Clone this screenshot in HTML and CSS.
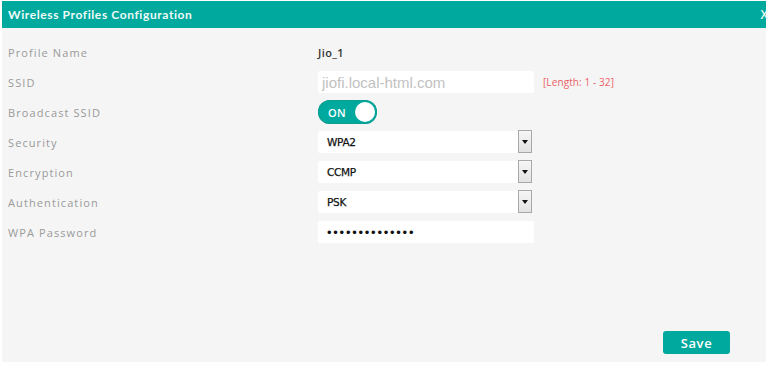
FILE: index.html
```html
<!DOCTYPE html>
<html>
<head>
<meta charset="utf-8">
<link rel="stylesheet" href="styles.css">
</head>
<body>
<div class="dialog">
  <div class="header">
    <span class="title">Wireless Profiles Configuration</span>
    <span class="close">X</span>
  </div>
  <div class="content">
    <div class="form">
      <div class="row">
        <div class="label">Profile Name</div>
        <div class="value"><span class="static">Jio_1</span></div>
      </div>
      <div class="row">
        <div class="label">SSID</div>
        <div class="value">
          <div class="input"><span class="placeholder">jiofi.local-html.com</span></div>
          <span class="hint">[Length: 1 - 32]</span>
        </div>
      </div>
      <div class="row">
        <div class="label">Broadcast SSID</div>
        <div class="value">
          <div class="toggle"><span class="toggle-text">ON</span><span class="knob"></span></div>
        </div>
      </div>
      <div class="row">
        <div class="label">Security</div>
        <div class="value">
          <div class="select"><span class="select-text">WPA2</span><span class="arrow"><span class="tri"></span></span></div>
        </div>
      </div>
      <div class="row">
        <div class="label">Encryption</div>
        <div class="value">
          <div class="select"><span class="select-text">CCMP</span><span class="arrow"><span class="tri"></span></span></div>
        </div>
      </div>
      <div class="row">
        <div class="label">Authentication</div>
        <div class="value">
          <div class="select"><span class="select-text">PSK</span><span class="arrow"><span class="tri"></span></span></div>
        </div>
      </div>
      <div class="row">
        <div class="label">WPA Password</div>
        <div class="value">
          <div class="input"><span class="dots">••••••••••••••</span></div>
        </div>
      </div>
    </div>
    <div class="footer">
      <button class="save">Save</button>
    </div>
  </div>
</div>
</body>
</html>
```
FILE: styles.css
```css
html, body {
  margin: 0;
  padding: 0;
  background: #ffffff;
}
body {
  font-family: "Open Sans", Lato, sans-serif;
}
.dialog {
  margin: 1px 2px 0 2px;
  width: 764px;
  height: 361px;
  display: flex;
  flex-direction: column;
  background: #f5f5f5;
}
.header {
  height: 27px;
  background: #00a99d;
  display: flex;
  align-items: center;
  justify-content: space-between;
  padding: 0 0 0 6px;
  color: #ffffff;
  flex-shrink: 0;
}
.title {
  font-family: Lato, sans-serif;
  font-size: 12px;
  font-weight: 700;
  letter-spacing: 0.6px;
  color: #eefaf8;
}
.close {
  font-size: 12px;
  font-weight: 600;
  color: #e6f7f5;
  margin-right: -2px;
}
.content {
  flex: 1;
  display: flex;
  flex-direction: column;
  padding-top: 9px;
}
.form {
  display: flex;
  flex-direction: column;
}
.row {
  height: 30px;
  display: flex;
  align-items: center;
}
.label {
  width: 310px;
  padding-left: 6px;
  box-sizing: border-box;
  font-size: 11px;
  letter-spacing: 1.1px;
  color: #9a9a9a;
}
.value {
  display: flex;
  align-items: center;
  padding-left: 6px;
}
.static {
  font-size: 11px;
  font-weight: 600;
  letter-spacing: 0.4px;
  color: #333333;
}
.input {
  width: 216px;
  height: 22px;
  background: #ffffff;
  border-radius: 2px;
  display: flex;
  align-items: center;
  padding-left: 4px;
  box-sizing: border-box;
}
.placeholder {
  font-family: "Liberation Sans", Arial, sans-serif;
  font-size: 15px;
  color: #c2c2c2;
}
.hint {
  margin-left: 9px;
  font-size: 10px;
  color: #ec5f67;
  letter-spacing: 0.1px;
}
.dots {
  font-family: "Liberation Sans", Arial, sans-serif;
  font-size: 13px;
  letter-spacing: 1.75px;
  color: #111111;
  padding-left: 5px;
}
.toggle {
  width: 59px;
  height: 24px;
  border-radius: 12px;
  background: #00a99d;
  box-sizing: border-box;
  display: flex;
  align-items: center;
  justify-content: space-between;
  padding: 0 2px 0 10px;
  box-shadow: inset 0 0 0 1px #0f9c91;
}
.toggle-text {
  font-size: 11px;
  font-weight: 600;
  color: #ffffff;
  letter-spacing: 0.3px;
}
.knob {
  width: 20px;
  height: 20px;
  border-radius: 50%;
  background: #ffffff;
}
.select {
  width: 214px;
  height: 22px;
  display: flex;
  align-items: stretch;
}
.select-text {
  flex: 1;
  background: #ffffff;
  border-radius: 2px 0 0 2px;
  display: flex;
  align-items: center;
  padding-left: 9px;
  font-family: "DejaVu Sans", Verdana, sans-serif;
  font-size: 10.5px;
  font-weight: 400;
  color: #111111;
  letter-spacing: -0.3px;
  -webkit-text-stroke: 0.25px #111111;
}
.arrow {
  width: 14px;
  box-sizing: border-box;
  border: 1px solid #a8a8a8;
  background: linear-gradient(#f6f6f6, #e2e2e2);
  display: flex;
  align-items: center;
  justify-content: center;
  margin-top: -1px;
}
.tri {
  width: 0;
  height: 0;
  border-left: 3px solid transparent;
  border-right: 3px solid transparent;
  border-top: 4px solid #111111;
}
.footer {
  margin-top: auto;
  display: flex;
  justify-content: flex-end;
  padding: 0 36px 8px 0;
}
.save {
  width: 67px;
  height: 23px;
  border: none;
  border-radius: 3px;
  background: #00a99d;
  color: #ffffff;
  font-family: "Open Sans", sans-serif;
  font-size: 13px;
  font-weight: 600;
  letter-spacing: 0.6px;
  padding: 0;
}
```
